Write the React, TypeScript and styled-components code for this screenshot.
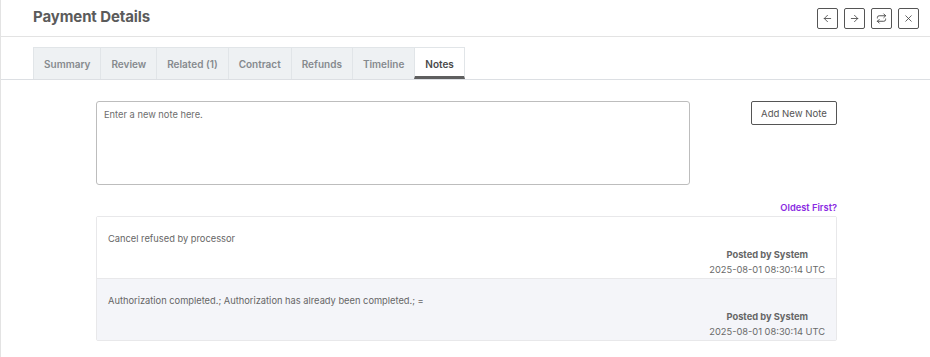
import styled, { createGlobalStyle } from 'styled-components'
import { ArrowLeft, ArrowRight, Repeat, X } from 'lucide-react'

type Note = {
  id: number
  text: string
  author: string
  postedAt: string
}

const tabs = ['Summary', 'Review', 'Related (1)', 'Contract', 'Refunds', 'Timeline', 'Notes']

const notes: Note[] = [
  {
    id: 1,
    text: 'Cancel refused by processor',
    author: 'System',
    postedAt: '2025-08-01 08:30:14 UTC',
  },
  {
    id: 2,
    text: 'Authorization completed.; Authorization has already been completed.; =',
    author: 'System',
    postedAt: '2025-08-01 08:30:14 UTC',
  },
]

const GlobalStyle = createGlobalStyle`
  * { box-sizing: border-box; }
  body {
    margin: 0;
    background: #fff;
    font-family: Inter, "Noto Sans", sans-serif;
  }
`

const Page = styled.div`
  min-height: 357px;
  border-left: 1px solid #e3e3e3;
  background: #fff;
`

const Header = styled.header`
  height: 37px;
  display: flex;
  align-items: center;
  justify-content: space-between;
  padding: 0 11px 0 32px;
  border-bottom: 1px solid #e3e3e3;
`

const Title = styled.h1`
  margin: 0 0 3px;
  font-size: 15px;
  font-weight: 700;
  color: #5b5b5b;
  letter-spacing: -0.1px;
`

const Actions = styled.div`
  display: flex;
  gap: 6px;
  margin-top: 1px;
`

const IconButton = styled.button`
  width: 21px;
  height: 21px;
  padding: 0;
  display: flex;
  align-items: center;
  justify-content: center;
  background: #fff;
  border: 1px solid #555;
  border-radius: 2px;
  color: #444;
  cursor: pointer;
`

const TabBar = styled.nav`
  display: flex;
  padding: 10px 0 0 32px;
  border-bottom: 1px solid #dcdfe3;
`

const Tab = styled.div<{ $active?: boolean }>`
  height: 32px;
  padding: 0 10px;
  display: flex;
  align-items: center;
  font-size: 10px;
  font-weight: 600;
  color: ${(p) => (p.$active ? '#4a4a4a' : '#868a8e')};
  background: ${(p) => (p.$active ? '#fff' : '#eef1f3')};
  border: 1px solid #e1e5e8;
  border-bottom: ${(p) => (p.$active ? '3px solid #5f5f5f' : 'none')};
  margin-right: -1px;
  padding-top: ${(p) => (p.$active ? '3px' : '0')};
`

const Content = styled.main`
  width: 741px;
  margin-left: 95px;
  padding-top: 21px;
`

const Composer = styled.div`
  display: flex;
  justify-content: space-between;
  align-items: flex-start;
`

const NoteInput = styled.textarea`
  width: 594px;
  height: 84px;
  resize: none;
  padding: 7px 7px;
  border: 1px solid #bdbdbd;
  border-radius: 3px;
  font-family: Inter, "Noto Sans", sans-serif;
  font-size: 9.3px;
  color: #555;
  outline: none;

  &::placeholder {
    color: #6e6e6e;
  }
`

const AddButton = styled.button`
  width: 86px;
  height: 24px;
  padding: 0;
  background: #fff;
  border: 1px solid #555;
  border-radius: 2px;
  font-family: Inter, "Noto Sans", sans-serif;
  font-size: 9.6px;
  color: #555;
  cursor: pointer;
`

const SortRow = styled.div`
  display: flex;
  justify-content: flex-end;
  margin-top: 17px;
  height: 14px;
`

const SortLink = styled.a`
  font-size: 9.3px;
  font-weight: 600;
  color: #8a2be2;
  text-decoration: none;
  cursor: pointer;
`

const NoteList = styled.div`
  border: 1px solid #e8e8ea;
  border-radius: 2px;
`

const NoteRow = styled.div<{ $shaded?: boolean }>`
  height: 61px;
  padding: 16px 11px 0 11px;
  background: ${(p) => (p.$shaded ? '#f4f5f9' : '#fff')};
  & + & {
    height: 62px;
    border-top: 1px solid #e8e8ea;
  }
`

const NoteText = styled.div`
  font-size: 9.3px;
  color: #666;
  line-height: 12px;
`

const NoteMeta = styled.div`
  margin-top: 2px;
  text-align: right;
  font-size: 9.3px;
  line-height: 15px;
  color: #6a6a6a;
`

const Author = styled.div`
  font-weight: 700;
  color: #666;
  margin-right: 17px;
`

export default function App() {
  return (
    <>
      <GlobalStyle />
      <Page>
        <Header>
          <Title>Payment Details</Title>
          <Actions>
            <IconButton aria-label="Previous">
              <ArrowLeft size={11} strokeWidth={1.8} />
            </IconButton>
            <IconButton aria-label="Next">
              <ArrowRight size={11} strokeWidth={1.8} />
            </IconButton>
            <IconButton aria-label="Refresh">
              <Repeat size={11} strokeWidth={2} />
            </IconButton>
            <IconButton aria-label="Close">
              <X size={11} strokeWidth={1.8} />
            </IconButton>
          </Actions>
        </Header>
        <TabBar>
          {tabs.map((tab) => (
            <Tab key={tab} $active={tab === 'Notes'}>
              {tab}
            </Tab>
          ))}
        </TabBar>
        <Content>
          <Composer>
            <NoteInput placeholder="Enter a new note here." />
            <AddButton>Add New Note</AddButton>
          </Composer>
          <SortRow>
            <SortLink>Oldest First?</SortLink>
          </SortRow>
          <NoteList>
            {notes.map((note, i) => (
              <NoteRow key={note.id} $shaded={i % 2 === 1}>
                <NoteText>{note.text}</NoteText>
                <NoteMeta>
                  <Author>Posted by {note.author}</Author>
                  <div>{note.postedAt}</div>
                </NoteMeta>
              </NoteRow>
            ))}
          </NoteList>
        </Content>
      </Page>
    </>
  )
}
